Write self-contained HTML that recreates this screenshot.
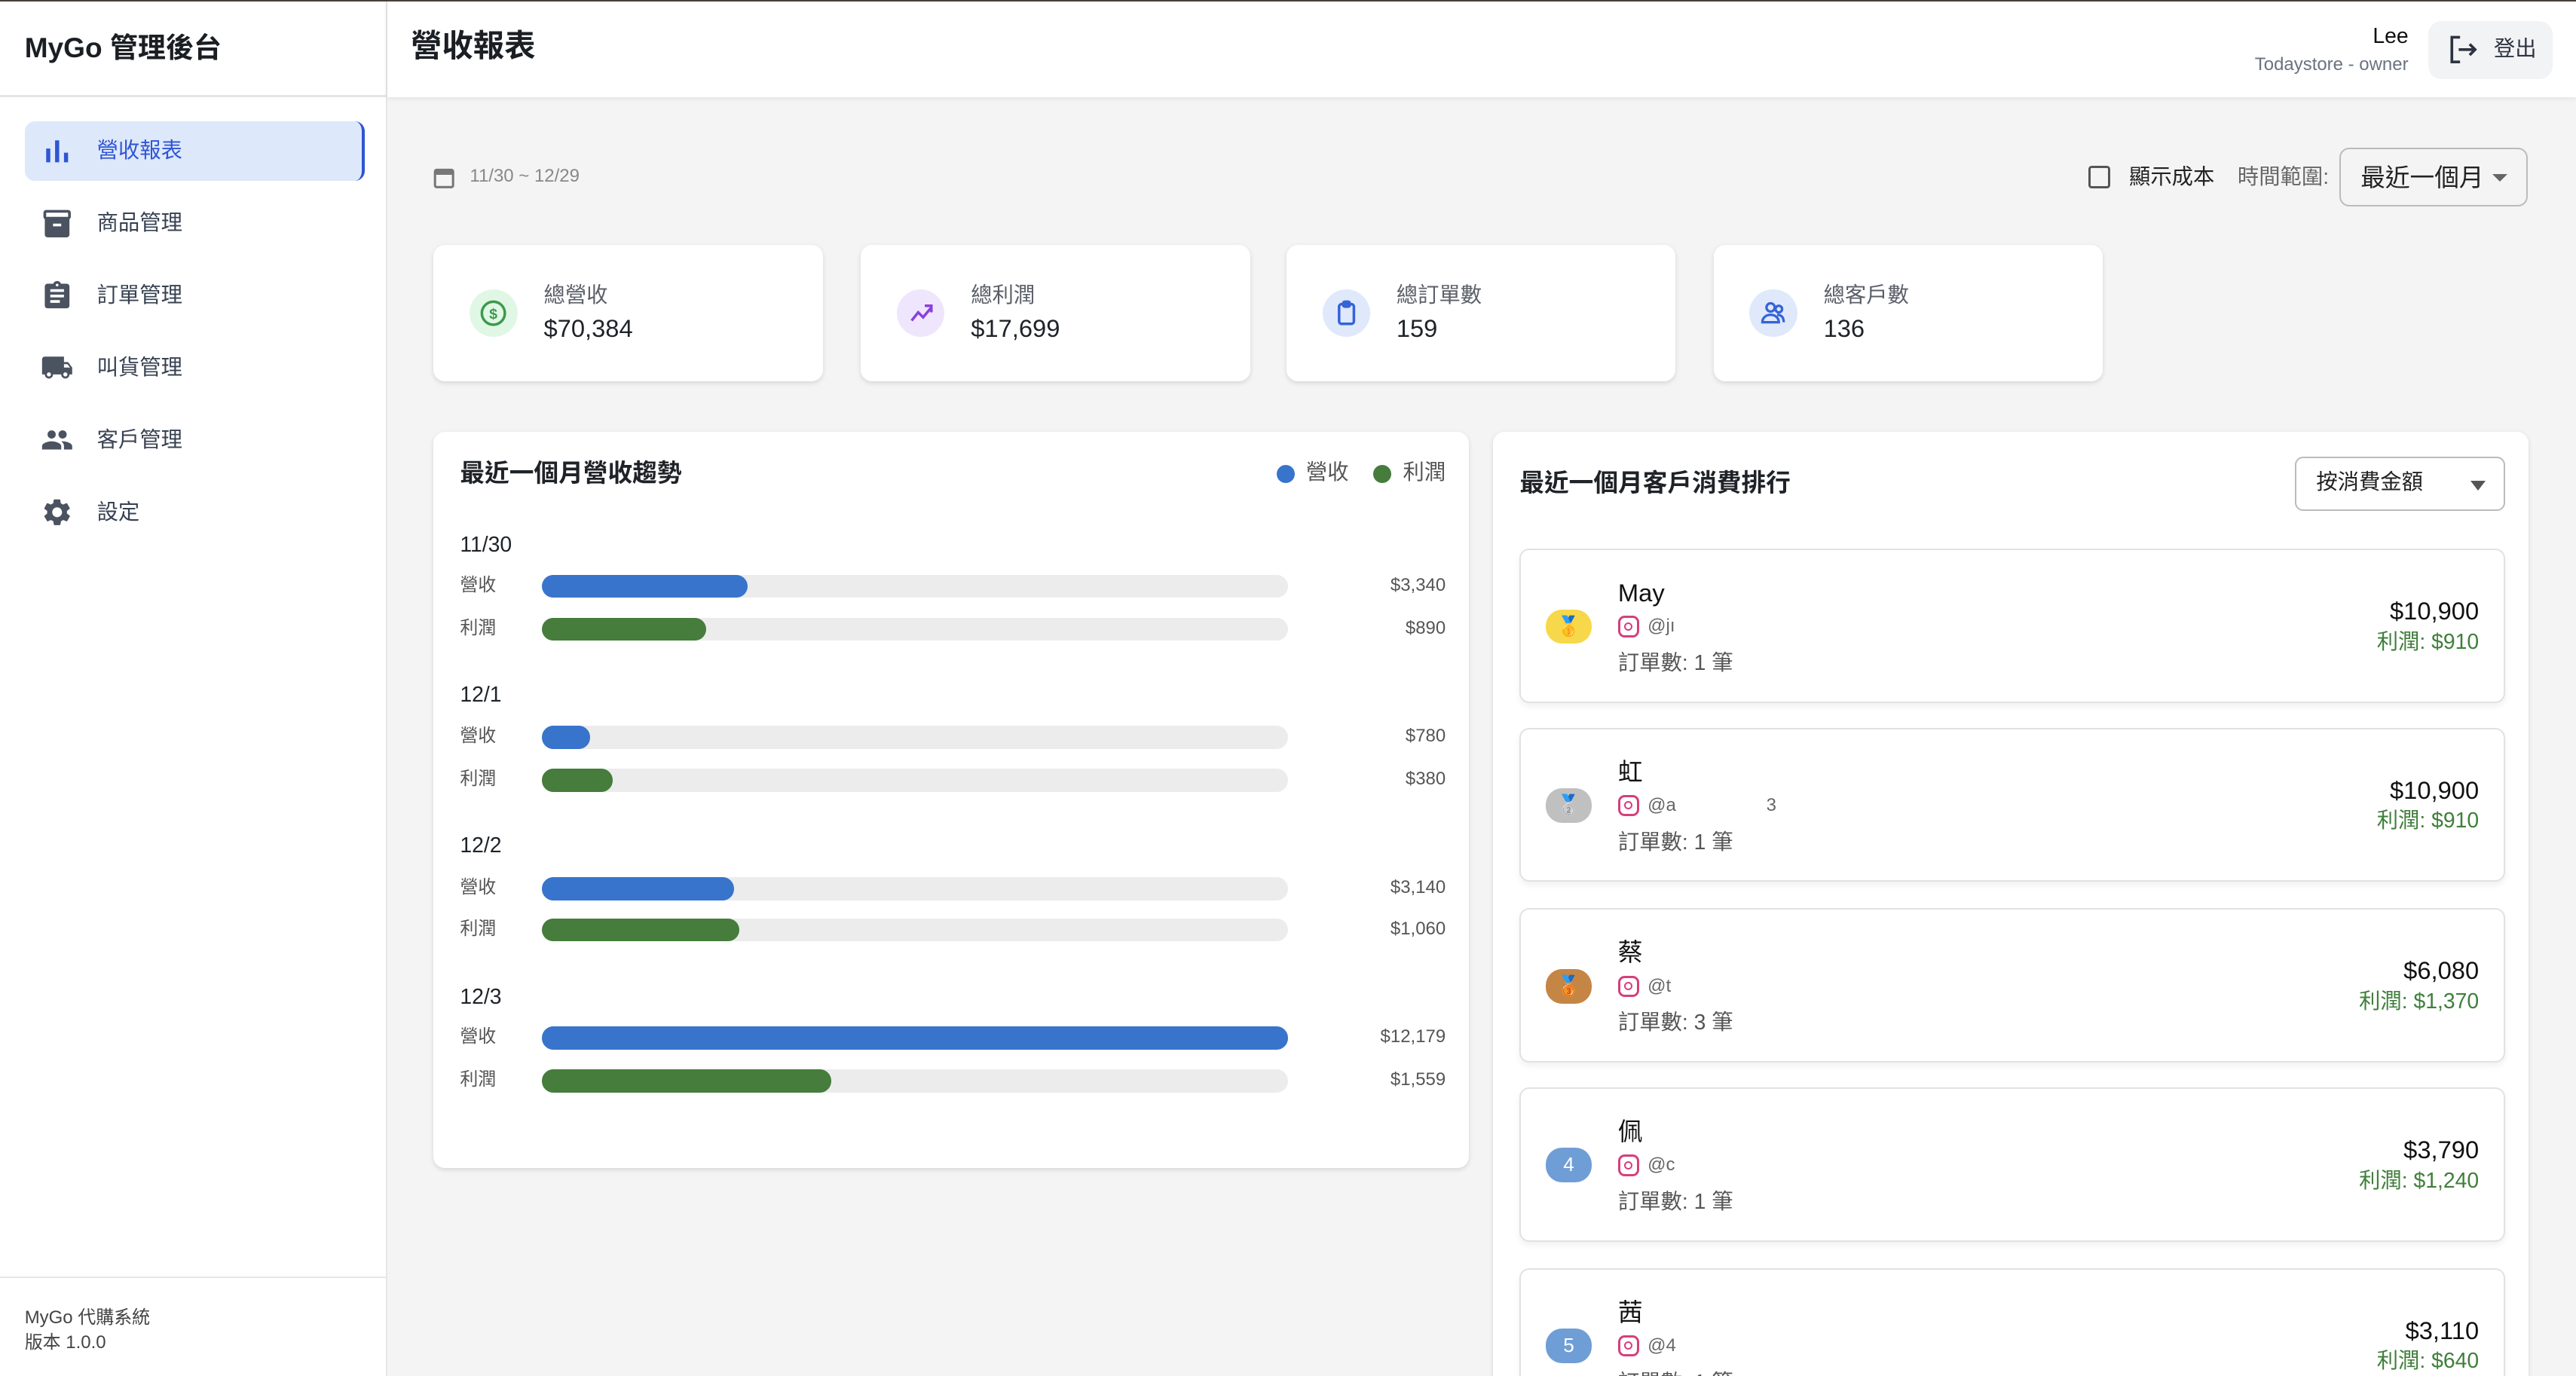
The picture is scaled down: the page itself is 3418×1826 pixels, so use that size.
<!DOCTYPE html>
<html><head><meta charset="utf-8"><style>
html,body{margin:0;padding:0;width:3418px;height:1826px;overflow:hidden;background:#f4f4f4}
#z{zoom:2.1798;width:1568px;height:838px;position:relative;font-family:"Liberation Sans","Noto Sans CJK TC",sans-serif;color:#1f2328;overflow:hidden;line-height:1.2}
.a{position:absolute}
#side{left:0;top:0;width:235px;height:838px;background:#fff;border-right:1px solid #e6e6e6}
.nav{position:absolute;left:15px;width:205px;height:36px;font-size:13px;color:#374151}
.nav svg{position:absolute;left:10px;top:8px;width:20px;height:20px;fill:#4b5260}
.nav span{position:absolute;left:44px;top:10px}
.card{background:#fff;border-radius:7px;box-shadow:0 1px 3px rgba(0,0,0,.12)}
.stat .ic{position:absolute;left:22px;top:27px;width:29px;height:29px;border-radius:50%}
.stat .l{position:absolute;left:67px;top:23px;font-size:13px;color:#5a5f68}
.stat .v{position:absolute;left:67px;top:42px;font-size:15px;color:#1f2328}
.lbl{position:absolute;left:16px;font-size:11px;color:#555}
.trk{position:absolute;left:66px;width:454px;height:14px;border-radius:7px;background:#ececec}
.trk i{display:block;height:14px;border-radius:7px}
.val{position:absolute;right:14px;font-size:11px;color:#555}
.dt{position:absolute;left:16px;font-size:13px;color:#1f2328}
.cc{position:absolute;left:16px;width:598px;height:92px;background:#fff;border:1px solid #e2e2e2;border-radius:6px;box-shadow:0 2px 4px rgba(0,0,0,.06)}
.cc .b{position:absolute;left:15px;top:36px;width:28px;height:21px;border-radius:10px;color:#fff;font-size:12px;text-align:center;line-height:21px}
.cc .n{position:absolute;left:59px;top:17px;font-size:15px;color:#111}
.cc .ig{position:absolute;left:59px;top:40px;width:13px;height:13px;border-radius:4px;border:1.5px solid #d63f7a;box-sizing:border-box}
.cc .ig:after{content:"";position:absolute;left:2.5px;top:2.5px;width:5px;height:5px;border-radius:50%;border:1.3px solid #d63f7a;box-sizing:border-box}
.cc .h{position:absolute;left:77px;top:40px;font-size:11px;color:#666}
.cc .o{position:absolute;left:59px;top:61px;font-size:13px;color:#555}
.cc .m{position:absolute;right:15px;top:28px;font-size:15px;color:#111}
.cc .p{position:absolute;right:15px;top:48px;font-size:13px;color:#3f7f3a}
</style></head><body><div id="z">
<div class="a" style="left:0;top:0;width:1568px;height:1px;background:#4a4037;z-index:9"></div>
<div id="side" class="a">
 <div class="a" style="left:15px;top:19px;font-size:17px;font-weight:bold;color:#1b1f24">MyGo 管理後台</div>
 <div class="a" style="left:0;top:58px;width:235px;height:1px;background:#e6e6e6"></div>
 <div class="nav" style="top:74px;background:#dde8fa;border-radius:6px;border-right:2px solid #2f55d4;color:#2f55d4"><svg viewBox="0 0 24 24" style="fill:#2f55d4"><path d="M4 10h3v10H4zM10.5 4h3v16h-3zM17 13h3v7h-3z"/></svg><span>營收報表</span></div>
 <div class="nav" style="top:118px"><svg viewBox="0 0 24 24"><path d="M20 2H4C3 2 2 3 2 4v3c0 .7.4 1.3 1 1.7V20c0 1.1 1.1 2 2 2h14c.9 0 2-.9 2-2V8.7c.6-.4 1-1 1-1.7V4c0-1-1-2-2-2zm-5 12H9v-2h6v2zm5-7H4V4h16v3z"/></svg><span>商品管理</span></div>
 <div class="nav" style="top:162px"><svg viewBox="0 0 24 24"><path d="M19 3h-4.2C14.4 1.8 13.3 1 12 1s-2.4.8-2.8 2H5c-1.1 0-2 .9-2 2v14c0 1.1.9 2 2 2h14c1.1 0 2-.9 2-2V5c0-1.1-.9-2-2-2zm-7 0c.6 0 1 .4 1 1s-.4 1-1 1-1-.4-1-1 .4-1 1-1zm2 14H7v-2h7v2zm3-4H7v-2h10v2zm0-4H7V7h10v2z"/></svg><span>訂單管理</span></div>
 <div class="nav" style="top:206px"><svg viewBox="0 0 24 24"><path d="M20 8h-3V4H3c-1.1 0-2 .9-2 2v11h2c0 1.7 1.3 3 3 3s3-1.3 3-3h6c0 1.7 1.3 3 3 3s3-1.3 3-3h2v-5l-3-4zM6 18.5c-.8 0-1.5-.7-1.5-1.5s.7-1.5 1.5-1.5 1.5.7 1.5 1.5-.7 1.5-1.5 1.5zm13.5-9l2 2.5H17V9.5h2.5zM18 18.5c-.8 0-1.5-.7-1.5-1.5s.7-1.5 1.5-1.5 1.5.7 1.5 1.5-.7 1.5-1.5 1.5z"/></svg><span>叫貨管理</span></div>
 <div class="nav" style="top:250px"><svg viewBox="0 0 24 24"><path d="M16 11c1.7 0 3-1.3 3-3s-1.3-3-3-3-3 1.3-3 3 1.3 3 3 3zm-8 0c1.7 0 3-1.3 3-3S9.7 5 8 5 5 6.3 5 8s1.3 3 3 3zm0 2c-2.3 0-7 1.2-7 3.5V19h14v-2.5C15 14.2 10.3 13 8 13zm8 0c-.3 0-.6 0-1 .1 1.2.8 2 2 2 3.4V19h6v-2.5c0-2.3-4.7-3.5-7-3.5z"/></svg><span>客戶管理</span></div>
 <div class="nav" style="top:294px"><svg viewBox="0 0 24 24"><path d="M19.1 12.9c0-.3.1-.6.1-.9s0-.6-.1-.9l2-1.6c.2-.1.2-.4.1-.6l-1.9-3.3c-.1-.2-.4-.3-.6-.2l-2.4 1c-.5-.4-1-.7-1.6-.9l-.4-2.5c0-.2-.2-.4-.5-.4h-3.8c-.2 0-.4.2-.5.4l-.4 2.5c-.6.2-1.1.5-1.6.9l-2.4-1c-.2-.1-.5 0-.6.2L2.7 8.9c-.1.2-.1.5.1.6l2 1.6c0 .3-.1.6-.1.9s0 .6.1.9l-2 1.6c-.2.1-.2.4-.1.6l1.9 3.3c.1.2.4.3.6.2l2.4-1c.5.4 1 .7 1.6.9l.4 2.5c0 .2.2.4.5.4h3.8c.2 0 .4-.2.5-.4l.4-2.5c.6-.2 1.1-.5 1.6-.9l2.4 1c.2.1.5 0 .6-.2l1.9-3.3c.1-.2.1-.5-.1-.6l-2-1.6zM12 15.6c-2 0-3.6-1.6-3.6-3.6S10 8.4 12 8.4s3.6 1.6 3.6 3.6-1.6 3.6-3.6 3.6z"/></svg><span>設定</span></div>
 <div class="a" style="left:0;top:777px;width:235px;height:1px;background:#e6e6e6"></div>
 <div class="a" style="left:15px;top:795px;font-size:11px;color:#444;line-height:15px">MyGo 代購系統<br>版本 1.0.0</div>
</div>
<div class="a" style="left:236px;top:0;width:1332px;height:59px;background:#fff;box-shadow:0 1px 3px rgba(0,0,0,.08)">
 <div class="a" style="left:14px;top:17px;font-size:19px;font-weight:bold;color:#1b1f24">營收報表</div>
 <div class="a" style="right:102px;top:14px;font-size:13px;color:#111">Lee</div>
 <div class="a" style="right:102px;top:33px;font-size:11px;color:#6b7280">Todaystore - owner</div>
 <div class="a" style="left:1242px;top:13px;width:76px;height:35px;background:#f2f3f5;border-radius:8px">
  <svg class="a" style="left:11px;top:7px" width="20" height="20" viewBox="0 0 24 24" fill="none" stroke="#2d3440" stroke-width="2"><path d="M10 3H4v18h6M9 12h12M17 8l4 4-4 4"/></svg>
  <div class="a" style="left:40px;top:9px;font-size:13px;color:#2d3440">登出</div>
 </div>
</div>
<svg class="a" style="left:264px;top:101px" width="13" height="14" viewBox="0 0 13 14"><rect x="1" y="2.5" width="11" height="10.5" rx="1" fill="none" stroke="#777" stroke-width="1.4"/><rect x="1" y="2.5" width="11" height="3" fill="#777"/></svg>
<div class="a" style="left:286px;top:101px;font-size:11px;color:#888">11/30 ~ 12/29</div>
<div class="a" style="left:1271px;top:101px;width:11px;height:11px;border:1.5px solid #555;border-radius:2px"></div>
<div class="a" style="left:1296px;top:100px;font-size:13px;color:#222">顯示成本</div>
<div class="a" style="left:1362px;top:100px;font-size:13px;color:#666">時間範圍:</div>
<div class="a" style="left:1424px;top:90px;width:113px;height:34px;border:1px solid #bbb;border-radius:6px">
 <div class="a" style="left:12px;top:8px;font-size:15px;color:#222">最近一個月</div>
 <div class="a" style="left:92px;top:15px;border-left:5px solid transparent;border-right:5px solid transparent;border-top:5px solid #666"></div>
</div>
<div class="a card stat" style="left:264px;top:149px;width:237px;height:83px"><div class="ic" style="background:#e1f7e6"><svg width="29" height="29" viewBox="0 0 29 29"><circle cx="14.5" cy="14.5" r="7" fill="none" stroke="#3d9a4c" stroke-width="1.6"/><text x="14.5" y="18" font-size="9" font-weight="bold" text-anchor="middle" fill="#3d9a4c" font-family="Liberation Sans">$</text></svg></div><div class="l">總營收</div><div class="v">$70,384</div></div>
<div class="a card stat" style="left:524px;top:149px;width:237px;height:83px"><div class="ic" style="background:#efe6fd"><svg width="29" height="29" viewBox="0 0 29 29" fill="none" stroke="#8a3fe0" stroke-width="1.6"><path d="M9 19l4-5 3 3 5-6M17 10h4v4"/></svg></div><div class="l">總利潤</div><div class="v">$17,699</div></div>
<div class="a card stat" style="left:783px;top:149px;width:237px;height:83px"><div class="ic" style="background:#dfe9fb"><svg width="29" height="29" viewBox="0 0 29 29" fill="none" stroke="#3563d8" stroke-width="1.6"><rect x="10" y="9" width="9" height="12" rx="1.5"/><rect x="12.5" y="7.5" width="4" height="3" rx="1"/></svg></div><div class="l">總訂單數</div><div class="v">159</div></div>
<div class="a card stat" style="left:1043px;top:149px;width:237px;height:83px"><div class="ic" style="background:#dfe9fb"><svg width="29" height="29" viewBox="0 0 29 29" fill="none" stroke="#3563d8" stroke-width="1.5"><circle cx="13" cy="11" r="2.5"/><circle cx="18" cy="12" r="2"/><path d="M8 20c0-3 2.5-4.5 5-4.5s5 1.5 5 4.5zM17 15.5c2.5 0 4 1.5 4 4.5"/></svg></div><div class="l">總客戶數</div><div class="v">136</div></div>

<div class="a card" style="left:264px;top:263px;width:630px;height:448px">
 <div class="a" style="left:16px;top:16px;font-size:15px;font-weight:bold">最近一個月營收趨勢</div>
 <div class="a" style="left:513px;top:20px;width:11px;height:11px;border-radius:50%;background:#3874cb"></div>
 <div class="a" style="left:531px;top:17px;font-size:13px;color:#555">營收</div>
 <div class="a" style="left:572px;top:20px;width:11px;height:11px;border-radius:50%;background:#467c3c"></div>
 <div class="a" style="left:590px;top:17px;font-size:13px;color:#555">利潤</div>

 <div class="dt" style="top:61px">11/30</div>
 <div class="lbl" style="top:87px">營收</div><div class="trk" style="top:87px"><i style="width:125px;background:#3874cb"></i></div><div class="val" style="top:87px">$3,340</div>
 <div class="lbl" style="top:113px">利潤</div><div class="trk" style="top:113px"><i style="width:100px;background:#467c3c"></i></div><div class="val" style="top:113px">$890</div>

 <div class="dt" style="top:152px">12/1</div>
 <div class="lbl" style="top:179px">營收</div><div class="trk" style="top:179px"><i style="width:29px;background:#3874cb"></i></div><div class="val" style="top:179px">$780</div>
 <div class="lbl" style="top:205px">利潤</div><div class="trk" style="top:205px"><i style="width:43px;background:#467c3c"></i></div><div class="val" style="top:205px">$380</div>

 <div class="dt" style="top:244px">12/2</div>
 <div class="lbl" style="top:271px">營收</div><div class="trk" style="top:271px"><i style="width:117px;background:#3874cb"></i></div><div class="val" style="top:271px">$3,140</div>
 <div class="lbl" style="top:296px">利潤</div><div class="trk" style="top:296px"><i style="width:120px;background:#467c3c"></i></div><div class="val" style="top:296px">$1,060</div>

 <div class="dt" style="top:336px">12/3</div>
 <div class="lbl" style="top:362px">營收</div><div class="trk" style="top:362px"><i style="width:454px;background:#3874cb"></i></div><div class="val" style="top:362px">$12,179</div>
 <div class="lbl" style="top:388px">利潤</div><div class="trk" style="top:388px"><i style="width:176px;background:#467c3c"></i></div><div class="val" style="top:388px">$1,559</div>
</div>

<div class="a card" style="left:909px;top:263px;width:630px;height:600px">
 <div class="a" style="left:16px;top:22px;font-size:15px;font-weight:bold">最近一個月客戶消費排行</div>
 <div class="a" style="left:488px;top:15px;width:126px;height:31px;border:1px solid #bbb;border-radius:5px">
  <div class="a" style="left:12px;top:7px;font-size:13px;color:#222">按消費金額</div>
  <div class="a" style="left:106px;top:14px;border-left:5px solid transparent;border-right:5px solid transparent;border-top:6px solid #555"></div>
 </div>
 <div class="cc" style="top:71px"><div class="b" style="background:#f7d84a">🥇</div><div class="n">May</div><div class="ig"></div><div class="h">@jı</div><div class="o">訂單數: 1 筆</div><div class="m">$10,900</div><div class="p">利潤: $910</div></div>
 <div class="cc" style="top:180px"><div class="b" style="background:#c0c0c0">🥈</div><div class="n">虹</div><div class="ig"></div><div class="h">@a&nbsp;&nbsp;&nbsp;&nbsp;&nbsp;&nbsp;&nbsp;&nbsp;&nbsp;&nbsp;&nbsp;&nbsp;&nbsp;&nbsp;&nbsp;&nbsp;&nbsp;&nbsp;3</div><div class="o">訂單數: 1 筆</div><div class="m">$10,900</div><div class="p">利潤: $910</div></div>
 <div class="cc" style="top:290px"><div class="b" style="background:#c58545">🥉</div><div class="n">蔡</div><div class="ig"></div><div class="h">@t</div><div class="o">訂單數: 3 筆</div><div class="m">$6,080</div><div class="p">利潤: $1,370</div></div>
 <div class="cc" style="top:399px"><div class="b" style="background:#6f9ed6">4</div><div class="n">佩</div><div class="ig"></div><div class="h">@c</div><div class="o">訂單數: 1 筆</div><div class="m">$3,790</div><div class="p">利潤: $1,240</div></div>
 <div class="cc" style="top:509px"><div class="b" style="background:#6f9ed6">5</div><div class="n">茜</div><div class="ig"></div><div class="h">@4</div><div class="o">訂單數: 1 筆</div><div class="m">$3,110</div><div class="p">利潤: $640</div></div>
</div>
</div></body></html>
